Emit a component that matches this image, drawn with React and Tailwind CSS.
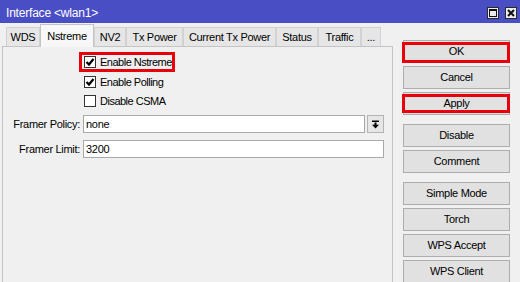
import React from "react";

function Tab({ label, w, active }) {
  if (active) {
    return (
      <div
        className={`h-[23px] -mb-px relative z-10 flex items-start justify-center pt-[3px] bg-[#f7f7f7] border border-b-0 border-[#c4c4c4]`}
        style={{ width: w }}
      >
        {label}
      </div>
    );
  }
  return (
    <div
      className="h-[19px] flex items-center justify-center bg-[#e6e6e6] border border-b-0 border-[#d2d2d2]"
      style={{ width: w }}
    >
      {label}
    </div>
  );
}

function Check({ checked, label, boxed }) {
  return (
    <div
      className={`flex items-center h-[14px] ml-[79px] ${
        boxed ? "w-[90px] outline-[3px] outline-solid outline-[#e8000b]" : "w-fit"
      }`}
    >
      <div className="ml-[2px] w-[12px] h-[12px] bg-white border border-[#333333] flex items-center justify-center">
        {checked && (
          <svg width="10" height="10" viewBox="0 0 10 10">
            <path d="M1.5 5 L4 7.5 L8.5 2" fill="none" stroke="#000" strokeWidth="2.2" />
          </svg>
        )}
      </div>
      <span className="ml-[4px] whitespace-nowrap tracking-[-0.5px]">{label}</span>
    </div>
  );
}

function Btn({ label, mt, mark }) {
  return (
    <div
      className={`relative h-[23px] shrink-0 bg-[#e1e1e1] border border-[#adadad] flex items-center justify-center ${mt}`}
    >
      {label}
      {mark === "ok" && (
        <span className="absolute -left-[2px] -right-[1px] top-[1px] -bottom-[1px] border-[3px] border-[#e8000b]" />
      )}
      {mark === "apply" && (
        <span className="absolute -left-[2px] -right-[1px] top-[1px] bottom-[1px] border-[3px] border-[#e8000b]" />
      )}
    </div>
  );
}

export default function App() {
  return (
    <div className="w-[520px] h-[282px] overflow-hidden bg-[#f0f0f0] flex flex-col font-['Liberation_Sans',Arial,sans-serif] text-[11px] tracking-[-0.3px] text-black">
      <div className="h-[23px] shrink-0 bg-[#4a4ec4] flex items-center pl-[6px] pr-[3px] pt-[3px]">
        <span className="text-white text-[12px] tracking-[-0.2px]">Interface &lt;wlan1&gt;</span>
        <div className="ml-auto flex gap-[6px]">
          <div className="w-[12px] h-[12px] bg-[#ececec] border border-[#2a2a2a] flex items-center justify-center">
            <div className="w-[8px] h-[8px] border border-[#111] border-t-2" />
          </div>
          <div className="w-[12px] h-[12px] bg-[#ececec] border border-[#2a2a2a] flex items-center justify-center">
            <svg width="8" height="8" viewBox="0 0 8 8">
              <path d="M1 1 L7 7 M7 1 L1 7" stroke="#111" strokeWidth="2" />
            </svg>
          </div>
        </div>
      </div>
      <div className="flex flex-1 min-h-0">
        <div className="w-[393px] flex flex-col">
          <div className="h-[23px] shrink-0 flex items-end pl-[6px]">
            <Tab label="WDS" w={34} />
            <Tab label="Nstreme" w={54} active />
            <Tab label="NV2" w={32} />
            <Tab label="Tx Power" w={57} />
            <Tab label="Current Tx Power" w={93} />
            <Tab label="Status" w={42} />
            <Tab label="Traffic" w={43} />
            <Tab label="..." w={20} />
          </div>
          <div className="flex-1 ml-[2px] w-[391px] border border-b-0 border-[#c4c4c4] bg-[#f0f0f0] flex flex-col">
            <div className="mt-[8px]">
              <Check checked label="Enable Nstreme" boxed />
            </div>
            <div className="mt-[6px]">
              <Check checked label="Enable Polling" />
            </div>
            <div className="mt-[5px]">
              <Check label="Disable CSMA" />
            </div>
            <div className="mt-[7px] flex items-center h-[18px]">
              <div className="w-[77px] text-right whitespace-nowrap">Framer Policy:</div>
              <div className="ml-[3px] w-[282px] h-[18px] bg-white border border-[#a9a9a9] flex items-center pl-[2px]">
                none
              </div>
              <div className="ml-[2px] w-[17px] h-[18px] bg-[#e6e6e6] border border-[#b4b4b4] flex items-center justify-center">
                <svg width="9" height="9" viewBox="0 0 9 9">
                  <rect x="1" y="0.5" width="7" height="1.5" fill="#000" />
                  <rect x="3.5" y="2.5" width="2" height="2.5" fill="#000" />
                  <path d="M1 4.8 L8 4.8 L4.5 8.5 Z" fill="#000" />
                </svg>
              </div>
            </div>
            <div className="mt-[7px] flex items-center h-[18px]">
              <div className="w-[77px] text-right whitespace-nowrap">Framer Limit:</div>
              <div className="ml-[3px] w-[301px] h-[18px] bg-white border border-[#a9a9a9] flex items-center pl-[2px]">
                3200
              </div>
            </div>
          </div>
        </div>
        <div className="ml-[10px] w-[107px] pt-[17px] flex flex-col">
          <Btn label="OK" mt="" mark="ok" />
          <Btn label="Cancel" mt="mt-[3px]" />
          <Btn label="Apply" mt="mt-[3px]" mark="apply" />
          <Btn label="Disable" mt="mt-[9px]" />
          <Btn label="Comment" mt="mt-[3px]" />
          <Btn label="Simple Mode" mt="mt-[9px]" />
          <Btn label="Torch" mt="mt-[3px]" />
          <Btn label="WPS Accept" mt="mt-[3px]" />
          <Btn label="WPS Client" mt="mt-[3px]" />
        </div>
      </div>
    </div>
  );
}
